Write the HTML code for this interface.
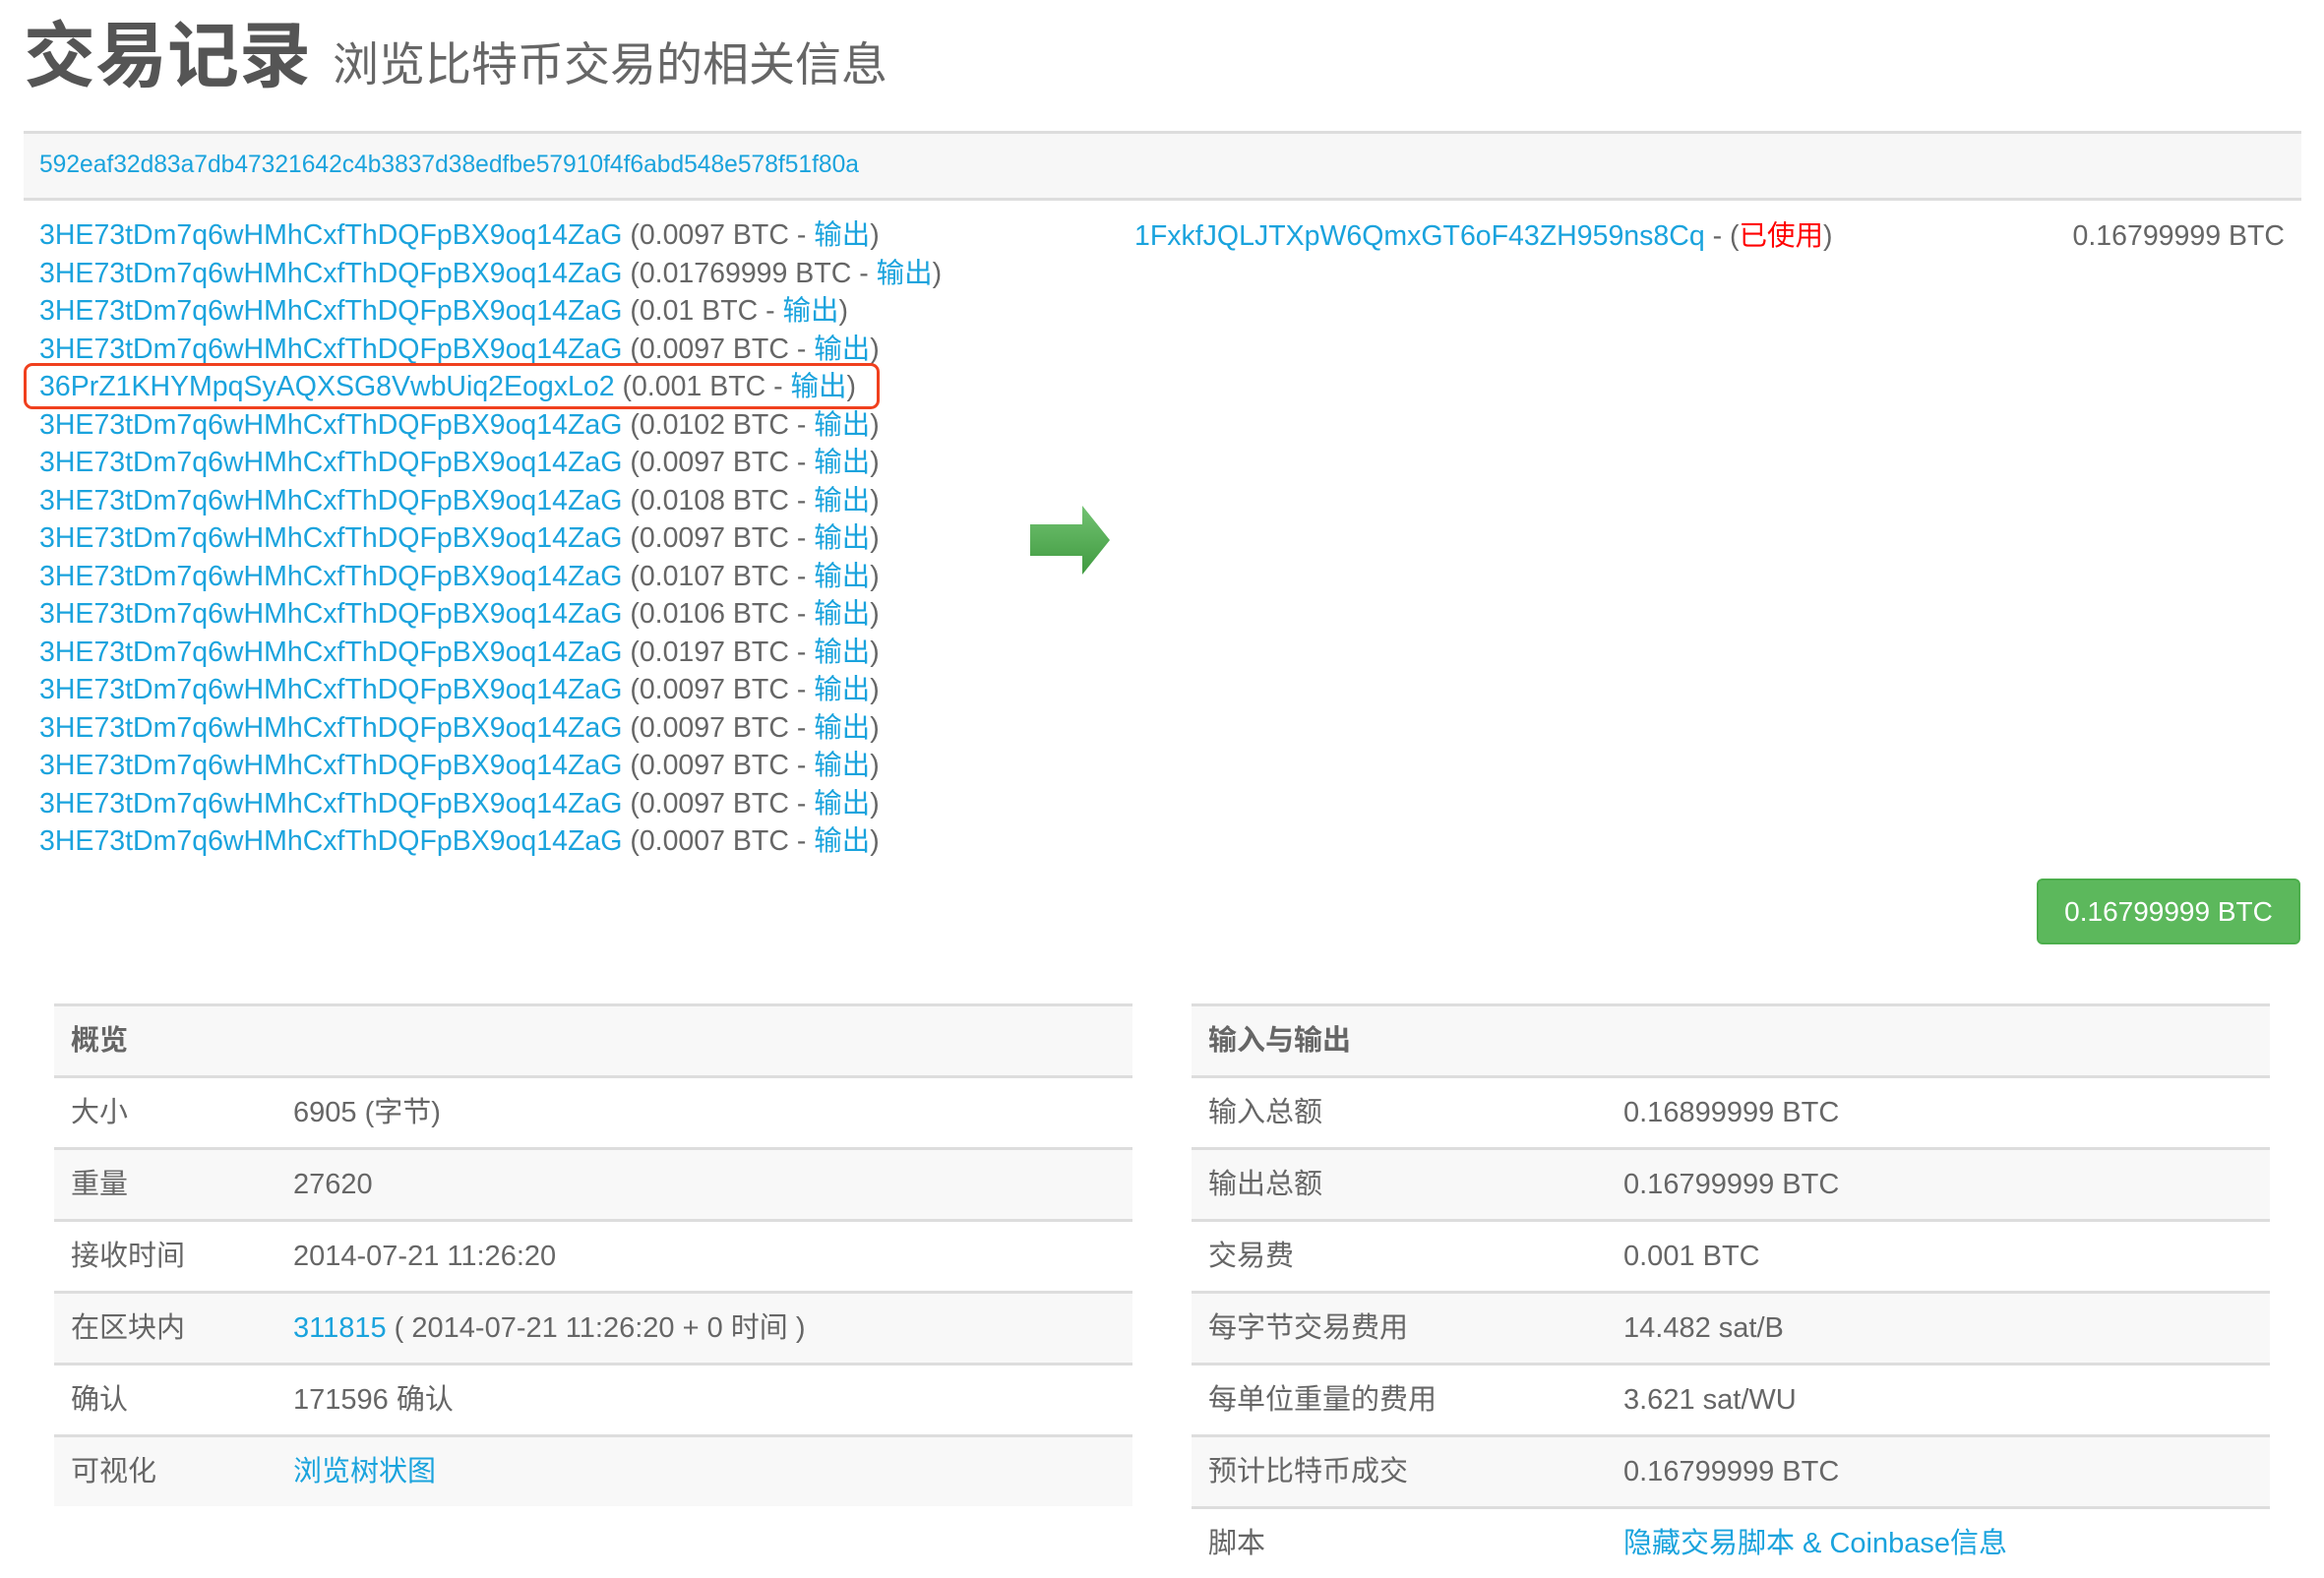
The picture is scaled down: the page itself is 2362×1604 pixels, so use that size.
<!DOCTYPE html>
<html><head><meta charset="utf-8"><style>
*{margin:0;padding:0;box-sizing:border-box}
body{width:2362px;height:1580px;background:#fff;position:relative;overflow:hidden;font-family:"Liberation Sans","Noto Sans CJK SC",sans-serif;color:#666}
.a{position:absolute;white-space:nowrap}
.l{color:#1aa3dd}
h1{position:absolute;left:24px;top:8px;font-size:73px;font-weight:bold;color:#555;white-space:nowrap;line-height:100px}
h1 small{font-size:47px;font-weight:normal;color:#666;margin-left:22px}
.hash{position:absolute;left:24px;top:133px;width:2315px;height:71px;background:#f7f7f7;border-top:3px solid #ddd;border-bottom:3px solid #ddd}
.in{position:absolute;left:40px;top:220px;font-size:28.5px;line-height:38.5px;white-space:nowrap}
.row{position:absolute;height:73px;border-top:3px solid #ddd;font-size:29px;line-height:70px}
.g{background:#f8f8f8}
.row span{position:absolute}
</style></head><body>
<h1>交易记录<small>浏览比特币交易的相关信息</small></h1>
<div class="hash"><span class="a l" style="left:16px;top:15px;font-size:24.6px;line-height:34px">592eaf32d83a7db47321642c4b3837d38edfbe57910f4f6abd548e578f51f80a</span></div>
<div class="in">
<div><span class="l">3HE73tDm7q6wHMhCxfThDQFpBX9oq14ZaG</span> (0.0097 BTC - <span class="l">输出</span>)</div>
<div><span class="l">3HE73tDm7q6wHMhCxfThDQFpBX9oq14ZaG</span> (0.01769999 BTC - <span class="l">输出</span>)</div>
<div><span class="l">3HE73tDm7q6wHMhCxfThDQFpBX9oq14ZaG</span> (0.01 BTC - <span class="l">输出</span>)</div>
<div><span class="l">3HE73tDm7q6wHMhCxfThDQFpBX9oq14ZaG</span> (0.0097 BTC - <span class="l">输出</span>)</div>
<div><span class="l">36PrZ1KHYMpqSyAQXSG8VwbUiq2EogxLo2</span> (0.001 BTC - <span class="l">输出</span>)</div>
<div><span class="l">3HE73tDm7q6wHMhCxfThDQFpBX9oq14ZaG</span> (0.0102 BTC - <span class="l">输出</span>)</div>
<div><span class="l">3HE73tDm7q6wHMhCxfThDQFpBX9oq14ZaG</span> (0.0097 BTC - <span class="l">输出</span>)</div>
<div><span class="l">3HE73tDm7q6wHMhCxfThDQFpBX9oq14ZaG</span> (0.0108 BTC - <span class="l">输出</span>)</div>
<div><span class="l">3HE73tDm7q6wHMhCxfThDQFpBX9oq14ZaG</span> (0.0097 BTC - <span class="l">输出</span>)</div>
<div><span class="l">3HE73tDm7q6wHMhCxfThDQFpBX9oq14ZaG</span> (0.0107 BTC - <span class="l">输出</span>)</div>
<div><span class="l">3HE73tDm7q6wHMhCxfThDQFpBX9oq14ZaG</span> (0.0106 BTC - <span class="l">输出</span>)</div>
<div><span class="l">3HE73tDm7q6wHMhCxfThDQFpBX9oq14ZaG</span> (0.0197 BTC - <span class="l">输出</span>)</div>
<div><span class="l">3HE73tDm7q6wHMhCxfThDQFpBX9oq14ZaG</span> (0.0097 BTC - <span class="l">输出</span>)</div>
<div><span class="l">3HE73tDm7q6wHMhCxfThDQFpBX9oq14ZaG</span> (0.0097 BTC - <span class="l">输出</span>)</div>
<div><span class="l">3HE73tDm7q6wHMhCxfThDQFpBX9oq14ZaG</span> (0.0097 BTC - <span class="l">输出</span>)</div>
<div><span class="l">3HE73tDm7q6wHMhCxfThDQFpBX9oq14ZaG</span> (0.0097 BTC - <span class="l">输出</span>)</div>
<div><span class="l">3HE73tDm7q6wHMhCxfThDQFpBX9oq14ZaG</span> (0.0007 BTC - <span class="l">输出</span>)</div>
</div>
<div class="a" style="left:24px;top:369px;width:870px;height:47px;border:3px solid #f0401e;border-radius:9px"></div>
<svg class="a" style="left:1045px;top:512px" width="86" height="74" viewBox="0 0 86 74"><defs><linearGradient id="gr" x1="0" y1="0" x2="0" y2="1"><stop offset="0" stop-color="#72c272"/><stop offset="1" stop-color="#3f9a3f"/></linearGradient></defs><path d="M2 21H55V2L83 37L55 72V53H2Z" fill="url(#gr)"/></svg>
<div class="a" style="left:1153px;top:221px;font-size:28.5px;line-height:38px"><span class="l">1FxkfJQLJTXpW6QmxGT6oF43ZH959ns8Cq</span> - (<span style="color:#f00">已使用</span>)</div>
<div class="a" style="right:40px;top:221px;font-size:28.5px;line-height:38px">0.16799999 BTC</div>
<div class="a" style="left:2070px;top:893px;width:268px;height:67px;background:#5cb85c;border:2px solid #4cae4c;border-radius:6px;color:#fff;font-size:28px;line-height:63px;text-align:center">0.16799999 BTC</div>

<div class="row g" style="left:55px;top:1020px;width:1096px;font-weight:bold"><span style="left:17px">概览</span></div>
<div class="row" style="left:55px;top:1093px;width:1096px"><span style="left:17px">大小</span><span style="left:243px">6905 (字节)</span></div>
<div class="row g" style="left:55px;top:1166px;width:1096px"><span style="left:17px">重量</span><span style="left:243px">27620</span></div>
<div class="row" style="left:55px;top:1239px;width:1096px"><span style="left:17px">接收时间</span><span style="left:243px">2014-07-21 11:26:20</span></div>
<div class="row g" style="left:55px;top:1312px;width:1096px"><span style="left:17px">在区块内</span><span style="left:243px"><span class="l" style="position:static">311815</span> ( 2014-07-21 11:26:20 + 0 时间 )</span></div>
<div class="row" style="left:55px;top:1385px;width:1096px"><span style="left:17px">确认</span><span style="left:243px">171596 确认</span></div>
<div class="row g" style="left:55px;top:1458px;width:1096px"><span style="left:17px">可视化</span><span class="l" style="left:243px">浏览树状图</span></div>

<div class="row g" style="left:1211px;top:1020px;width:1096px;font-weight:bold"><span style="left:17px">输入与输出</span></div>
<div class="row" style="left:1211px;top:1093px;width:1096px"><span style="left:17px">输入总额</span><span style="left:439px">0.16899999 BTC</span></div>
<div class="row g" style="left:1211px;top:1166px;width:1096px"><span style="left:17px">输出总额</span><span style="left:439px">0.16799999 BTC</span></div>
<div class="row" style="left:1211px;top:1239px;width:1096px"><span style="left:17px">交易费</span><span style="left:439px">0.001 BTC</span></div>
<div class="row g" style="left:1211px;top:1312px;width:1096px"><span style="left:17px">每字节交易费用</span><span style="left:439px">14.482 sat/B</span></div>
<div class="row" style="left:1211px;top:1385px;width:1096px"><span style="left:17px">每单位重量的费用</span><span style="left:439px">3.621 sat/WU</span></div>
<div class="row g" style="left:1211px;top:1458px;width:1096px"><span style="left:17px">预计比特币成交</span><span style="left:439px">0.16799999 BTC</span></div>
<div class="row" style="left:1211px;top:1531px;width:1096px"><span style="left:17px">脚本</span><span class="l" style="left:439px">隐藏交易脚本 &amp; Coinbase信息</span></div>
</body></html>
